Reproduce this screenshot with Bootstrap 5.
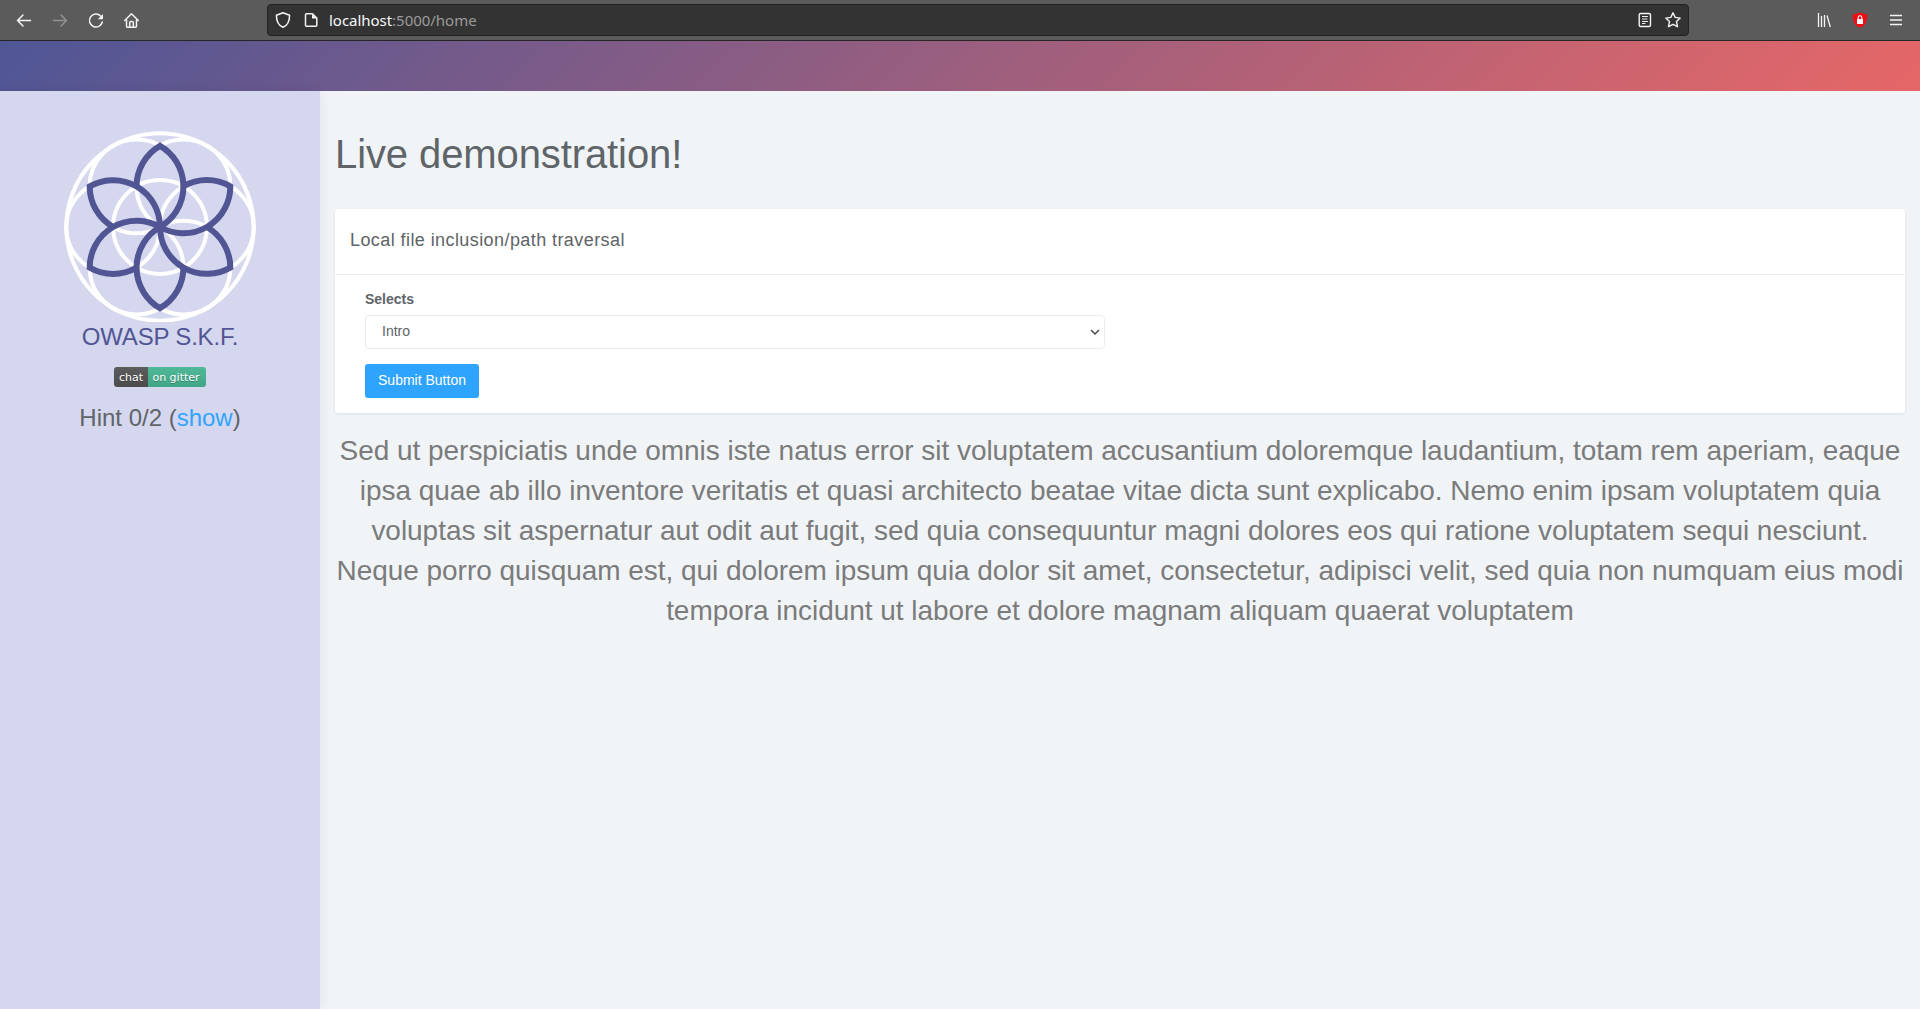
<!DOCTYPE html>
<html lang="en">
<head>
<meta charset="utf-8">
<meta name="viewport" content="width=device-width, initial-scale=1">
<title>Live demonstration</title>
<link href="https://cdn.jsdelivr.net/npm/bootstrap@5.3.0/dist/css/bootstrap.min.css" rel="stylesheet">
<style>
body{font-family:"Liberation Sans",Arial,sans-serif;font-size:14px;line-height:21px;color:#5e6468;background:#f0f4f7}
svg{flex:none}
.browser-bar{height:41px;background:#5b5b5b;border-bottom:1px solid #262626;padding:0 6px;color:#f4f4f4}
.tool-btn{width:36px;height:40px;padding:0;border:0;color:#f4f4f4;background:none}
.tool-btn:disabled{color:#929292;opacity:1}
.url-box{width:1422px;height:32px;margin-left:117px;background:#333;border:1px solid #222;border-radius:4px;padding:0 5px 0 5px;font:15px/30px "Noto Sans",sans-serif;color:#9b9b9b}
.url-box b{font-weight:400;color:#f9f9fa}
.url-text{margin-left:8px;letter-spacing:-.03px}
.top-banner{height:50px;background:linear-gradient(135deg,#4f5696,#e66767)}
.side-panel{width:320px;background:#d5d7ee;padding-top:40px;box-shadow:0 0 12px rgba(0,0,0,.07)}
.brand-name{font-size:24px;line-height:28px;color:#515594;letter-spacing:-.2px;margin-top:1px}
.gitter{height:20px;border-radius:3px;overflow:hidden;font:11px/21px "DejaVu Sans",sans-serif;color:#fff;text-shadow:0 1px 0 rgba(1,1,1,.3);margin:16px 0}
.gitter span:first-child{width:34px;background:linear-gradient(#5c5c5c,#4c4c4c)}
.gitter span:last-child{width:58px;padding-right:2px;background:linear-gradient(#50b998,#41a585)}
.hint-line{font-size:24px;line-height:29px}
.hint-line a{color:#2fa4ff}
.main-area{padding:39px 15px 0;min-width:0}
.page-title{font-size:40px;line-height:48px;letter-spacing:-.1px;margin-bottom:31px}
.demo-card{border:0;border-radius:3px;box-shadow:0 1px 3px rgba(0,0,0,.08);color:inherit}
.demo-card .card-header{height:66px;background:#fff;border-bottom:1px solid #ececec;padding:18px 15px 0;font-size:18px;line-height:26px;letter-spacing:.42px}
.demo-card .card-body{padding:14px 30px 15px}
.pick{width:740px;height:34px;border:1px solid #ececec;border-radius:4px;padding:0 3px 2px 16px;margin:5px 0 15px}
.btn-go{height:34px;width:114px;padding:0 0 2px;font-size:14px;border:0;border-radius:3px;background:#2fa4ff;color:#fff}
.result{font-size:28px;line-height:40px;letter-spacing:-.04px;color:#7b7b7b;margin-top:18px}
</style>
</head>
<body class="d-flex flex-column vh-100 overflow-hidden">
<nav class="browser-bar d-flex align-items-center flex-shrink-0">
  <button class="tool-btn d-flex align-items-center justify-content-center"><svg width="20" height="20" fill="none" stroke="currentColor" stroke-width="1.5" stroke-linecap="round" stroke-linejoin="round"><path d="M16.5 10.5H3.5M9 5L3.5 10.5L9 16"/></svg></button>
  <button class="tool-btn d-flex align-items-center justify-content-center" disabled><svg width="20" height="20" fill="none" stroke="currentColor" stroke-width="1.5" stroke-linecap="round" stroke-linejoin="round"><path d="M3.5 10.5H16.5M11 5L16.5 10.5L11 16"/></svg></button>
  <button class="tool-btn d-flex align-items-center justify-content-center"><svg width="20" height="20" fill="none" stroke="currentColor" stroke-width="1.5" stroke-linecap="round"><path d="M14.6 6A6.500 6.500 0 1 0 16.300 12"/><path d="M17 4v5.2h-5.2z" fill="currentColor" stroke="none"/></svg></button>
  <button class="tool-btn d-flex align-items-center justify-content-center"><svg width="20" height="20" fill="none" stroke="currentColor" stroke-width="1.5" stroke-linecap="round" stroke-linejoin="round"><path d="M2.7 10.5L9.5 3.8L16.3 10.5M4.5 9.5v6.7q0 1 1 1h8q1 0 1-1V9.5M7.7 17v-4.500q0-1 1-1h1.6q1 0 1 1v4.500"/></svg></button>
  <div class="url-box d-flex align-items-center">
    <svg width="20" height="20" fill="none" stroke="#f4f4f4" stroke-width="1.5" stroke-linejoin="round"><path d="M10 2.7L16.6 5.2C16.6 11 15 15.200 10 17.300C5 15.200 3.400 11 3.400 5.200Z"/></svg>
    <svg class="ms-2" width="20" height="20" fill="none" stroke="#f4f4f4" stroke-width="1.5" stroke-linejoin="round"><path d="M5.500 3.700H11.500L15.800 8V15.300q0 1-1 1H5.500q-1 0-1-1V4.700q0-1 1-1Z"/><path d="M11 3.700V8.500h4.800z" fill="#f4f4f4" stroke="none"/></svg>
    <span class="url-text"><b>localhost</b>:5000/home</span>
    <svg class="ms-auto" width="20" height="20" fill="none" stroke="#f4f4f4" stroke-width="1.4" stroke-linecap="round"><rect x="4.200" y="3.500" width="11.300" height="13" rx="1.500"/><path d="M7.500 6.500h5M7.500 9h4.500M7.500 11.500h5M7.500 13.500h2.500" stroke-width="1"/></svg>
    <svg class="ms-2" width="20" height="20" fill="none" stroke="#f4f4f4" stroke-width="1.4" stroke-linejoin="round"><path d="M10 2.800L12.200 7.400L17.200 8.100L13.500 11.600L14.500 16.700L10 14.300L5.500 16.700L6.500 11.600L2.800 8.100L7.800 7.400Z"/></svg>
  </div>
  <div class="d-flex ms-auto">
    <button class="tool-btn d-flex align-items-center justify-content-center"><svg width="20" height="20" fill="none" stroke="currentColor" stroke-width="1.300"><path d="M4.500 3v14M7.500 6v11M10.500 5v12M13 5.500L16.300 17"/></svg></button>
    <button class="tool-btn d-flex align-items-center justify-content-center"><svg width="20" height="20"><path d="M10 2.200Q13.500 4 17.200 4.300C17.500 11 15.500 16 10 17.800C4.500 16 2.500 11 2.800 4.300Q6.500 4 10 2.200Z" fill="#ed0f14"/><rect x="7" y="9" width="6" height="5" rx=".5" fill="#fff"/><path d="M8.200 9V7.500a1.800 1.800 0 0 1 3.600 0V9" fill="none" stroke="#fff" stroke-width="1.100"/></svg></button>
    <button class="tool-btn d-flex align-items-center justify-content-center"><svg width="20" height="20" stroke="currentColor" stroke-width="1.300"><path d="M4 5.500h12M4 10h12M4 14.500h12"/></svg></button>
  </div>
</nav>
<header class="top-banner flex-shrink-0"></header>
<div class="d-flex flex-grow-1">
  <aside class="side-panel d-flex flex-column align-items-center flex-shrink-0">
    <svg width="192" height="191" viewBox="-96 -96 192 191" fill="none">
      <defs>
        <path id="petal" d="M0 0A46.900 46.900 0 0 0 0 -81.200A46.900 46.900 0 0 0 -23.450 -40.600"/>
      </defs>
      <g stroke="#fff" stroke-width="4">
        <circle r="93.700"/><circle r="46.900"/>
        <circle cx="46.900" r="46.900"/><circle cx="-46.900" r="46.900"/>
        <circle cx="23.450" cy="-40.600" r="46.900"/><circle cx="-23.450" cy="-40.600" r="46.900"/>
        <circle cx="23.450" cy="40.600" r="46.900"/><circle cx="-23.450" cy="40.600" r="46.900"/>
      </g>
      <g stroke="#515594" stroke-width="6">
        <use href="#petal"/><use href="#petal" transform="rotate(60)"/><use href="#petal" transform="rotate(120)"/>
        <use href="#petal" transform="rotate(180)"/><use href="#petal" transform="rotate(240)"/><use href="#petal" transform="rotate(300)"/>
      </g>
    </svg>
    <div class="brand-name">OWASP S.K.F.</div>
    <div class="gitter d-flex text-center"><span>chat</span><span>on gitter</span></div>
    <div class="hint-line">Hint 0/2 (<a href="#" class="text-decoration-none">show</a>)</div>
  </aside>
  <main class="main-area flex-grow-1">
    <h1 class="page-title fw-normal">Live demonstration!</h1>
    <section class="card demo-card">
      <div class="card-header">Local file inclusion/path traversal</div>
      <div class="card-body">
        <div class="fw-bold">Selects</div>
        <div class="pick d-flex align-items-center justify-content-between" role="combobox"><span>Intro</span><svg width="12" height="12" fill="none" stroke="#4a4a4a" stroke-width="1.500"><path d="M2 5L6 9L10 5"/></svg></div>
        <button class="btn btn-go">Submit Button</button>
      </div>
    </section>
    <p class="result text-center text-nowrap">Sed ut perspiciatis unde omnis iste natus error sit voluptatem accusantium doloremque laudantium, totam rem aperiam, eaque<br>ipsa quae ab illo inventore veritatis et quasi architecto beatae vitae dicta sunt explicabo. Nemo enim ipsam voluptatem quia<br>voluptas sit aspernatur aut odit aut fugit, sed quia consequuntur magni dolores eos qui ratione voluptatem sequi nesciunt.<br>Neque porro quisquam est, qui dolorem ipsum quia dolor sit amet, consectetur, adipisci velit, sed quia non numquam eius modi<br>tempora incidunt ut labore et dolore magnam aliquam quaerat voluptatem</p>
  </main>
</div>
<script src="https://cdn.jsdelivr.net/npm/bootstrap@5.3.0/dist/js/bootstrap.bundle.min.js"></script>
</body>
</html>
